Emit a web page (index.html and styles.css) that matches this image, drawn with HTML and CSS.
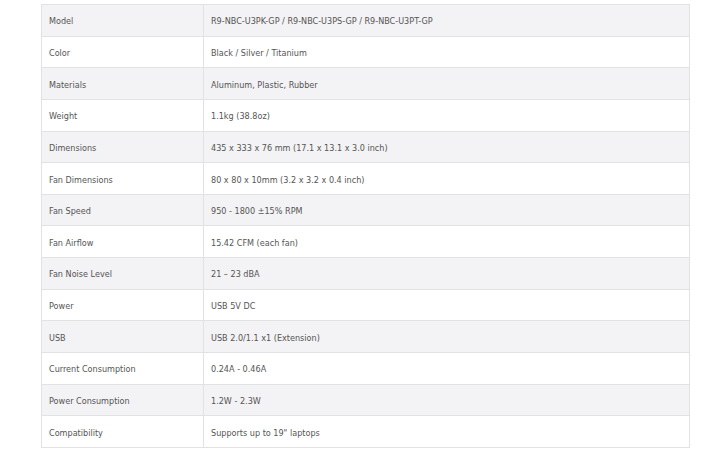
FILE: index.html
```html
<!DOCTYPE html>
<html>
<head>
<meta charset="utf-8">
<link rel="stylesheet" href="styles.css">
</head>
<body>
<table class="specs">
<tbody>
<tr><td class="k">Model</td><td>R9-NBC-U3PK-GP / R9-NBC-U3PS-GP / R9-NBC-U3PT-GP</td></tr>
<tr><td class="k">Color</td><td>Black / Silver / Titanium</td></tr>
<tr><td class="k">Materials</td><td>Aluminum, Plastic, Rubber</td></tr>
<tr><td class="k">Weight</td><td>1.1kg (38.8oz)</td></tr>
<tr><td class="k">Dimensions</td><td>435 x 333 x 76 mm (17.1 x 13.1 x 3.0 inch)</td></tr>
<tr><td class="k">Fan Dimensions</td><td>80 x 80 x 10mm (3.2 x 3.2 x 0.4 inch)</td></tr>
<tr><td class="k">Fan Speed</td><td>950 - 1800 ±15% RPM</td></tr>
<tr><td class="k">Fan Airflow</td><td>15.42 CFM (each fan)</td></tr>
<tr><td class="k">Fan Noise Level</td><td>21 – 23 dBA</td></tr>
<tr><td class="k">Power</td><td>USB 5V DC</td></tr>
<tr><td class="k">USB</td><td>USB 2.0/1.1 x1 (Extension)</td></tr>
<tr><td class="k">Current Consumption</td><td>0.24A - 0.46A</td></tr>
<tr><td class="k">Power Consumption</td><td>1.2W - 2.3W</td></tr>
<tr><td class="k">Compatibility</td><td>Supports up to 19" laptops</td></tr>
</tbody>
</table>
</body>
</html>
```
FILE: styles.css
```css
html, body {
  margin: 0;
  padding: 0;
  background: #ffffff;
}
body {
  padding: 4px 0 0 41px;
  font-family: "DejaVu Sans", Verdana, sans-serif;
  font-size: 8.1px;
  color: #555555;
}
.specs {
  border-collapse: collapse;
  width: 649px;
  table-layout: fixed;
}
.specs td {
  border: 1px solid #e2e1e3;
  height: 31.65px;
  padding: 2px 7px 0 7px;
  vertical-align: middle;
  box-sizing: border-box;
  line-height: 10px;
  white-space: nowrap;
}
.specs td.k {
  width: 162px;
}
.specs tr:nth-child(odd) td {
  background: #f3f2f4;
}
```
